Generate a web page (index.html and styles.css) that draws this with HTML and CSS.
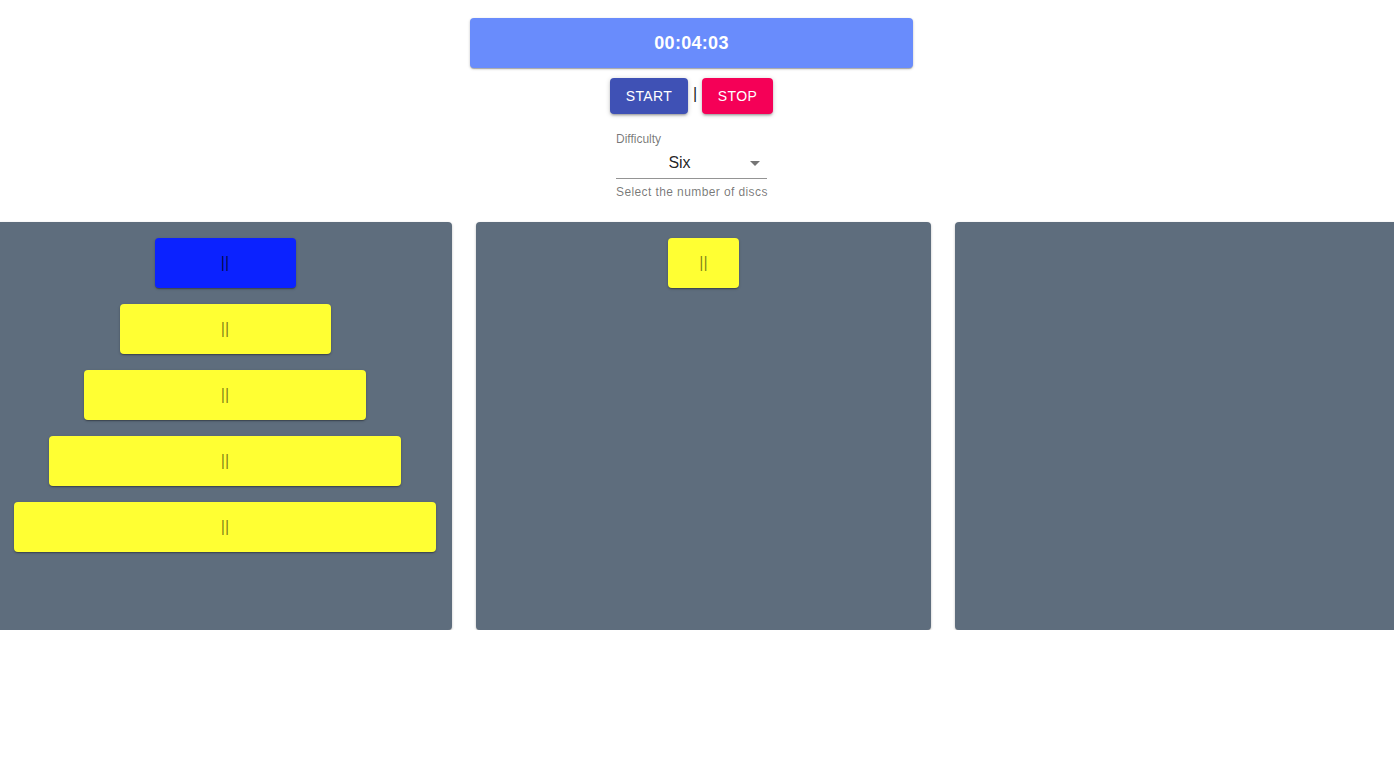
FILE: index.html
```html
<!DOCTYPE html>
<html>
<head>
<meta charset="utf-8">
<title>Towers of Hanoi</title>
<link rel="stylesheet" href="styles.css">
</head>
<body>
<div class="top">
  <div class="timer">00:04:03</div>
  <div class="controls">
    <button class="btn btn-start">START</button>
    <span class="sep">|</span>
    <button class="btn btn-stop">STOP</button>
  </div>
  <div class="form">
    <label class="form-label">Difficulty</label>
    <div class="select">
      <span class="select-value">Six</span>
      <svg class="select-icon" viewBox="0 0 24 24" width="24" height="24"><path d="M7 10l5 5 5-5z"/></svg>
    </div>
    <p class="helper">Select the number of discs</p>
  </div>
</div>
<div class="board">
  <div class="tower tower-first">
    <div class="disc disc-blue w2">||</div>
    <div class="disc w3">||</div>
    <div class="disc w4">||</div>
    <div class="disc w5">||</div>
    <div class="disc w6">||</div>
  </div>
  <div class="tower">
    <div class="disc w1">||</div>
  </div>
  <div class="tower"></div>
</div>
</body>
</html>
```

FILE: styles.css
```css
html, body {
  margin: 0;
  padding: 0;
  background: #ffffff;
  font-family: "Liberation Sans", Arial, sans-serif;
  overflow-x: hidden;
}

.top {
  width: 1383px;
  display: flex;
  flex-direction: column;
  align-items: center;
  padding-top: 18px;
}

.timer {
  width: 443px;
  height: 50px;
  box-sizing: border-box;
  background: #698cfc;
  border-radius: 4px;
  color: #ffffff;
  font-size: 18px;
  font-weight: 700;
  letter-spacing: 0.3px;
  display: flex;
  align-items: center;
  justify-content: center;
  box-shadow: 0 1px 3px rgba(0,0,0,0.2), 0 1px 1px rgba(0,0,0,0.14), 0 2px 1px -1px rgba(0,0,0,0.12);
}

.controls {
  margin-top: 10px;
  display: flex;
  align-items: center;
  height: 36px;
}

.btn {
  height: 36px;
  border: none;
  border-radius: 4px;
  padding: 6px 0;
  font-family: "Liberation Sans", Arial, sans-serif;
  font-size: 14px;
  font-weight: 400;
  letter-spacing: 0.4px;
  color: #ffffff;
  text-transform: uppercase;
  box-shadow: 0 1px 5px rgba(0,0,0,0.2), 0 2px 2px rgba(0,0,0,0.14), 0 3px 1px -2px rgba(0,0,0,0.12);
}

.btn-start {
  width: 78px;
  background: #3f51b5;
}

.btn-stop {
  width: 71px;
  background: #f50057;
}

.sep {
  width: 14px;
  text-align: center;
  font-size: 16px;
  color: #222222;
  margin-top: -4px;
}

.form {
  margin-top: 17px;
  position: relative;
  width: 151px;
  padding-top: 16px;
}

.form-label {
  position: absolute;
  left: 0;
  top: 0;
  font-size: 12px;
  line-height: 1;
  margin-top: 2px;
  color: rgba(0,0,0,0.54);
}

.select {
  position: relative;
  height: 32px;
  box-sizing: border-box;
  border-bottom: 1px solid rgba(0,0,0,0.42);
  padding: 6px 24px 7px 0;
  text-align: center;
}

.select-value {
  font-size: 16px;
  line-height: 19px;
  color: rgba(0,0,0,0.87);
}

.select-icon {
  position: absolute;
  right: 0;
  top: 4px;
  fill: rgba(0,0,0,0.54);
}

.helper {
  margin: 3px 0 0;
  font-size: 12px;
  line-height: 20px;
  letter-spacing: 0.4px;
  color: rgba(0,0,0,0.54);
  white-space: nowrap;
}

.board {
  margin-top: 20px;
  margin-left: -3px;
  display: flex;
  gap: 24px;
  width: 1413px;
}

.tower {
  flex: 0 0 455px;
  height: 408px;
  background: #5e6d7d;
  border-radius: 4px;
  box-shadow: 0 1px 3px rgba(0,0,0,0.2), 0 1px 1px rgba(0,0,0,0.14), 0 2px 1px -1px rgba(0,0,0,0.12);
  display: flex;
  flex-direction: column;
  align-items: center;
  padding-top: 16px;
  gap: 16px;
  box-sizing: border-box;
}

.tower-first {
  padding-left: 1px;
}

.disc {
  height: 50px;
  flex: 0 0 50px;
  background: #ffff33;
  border-radius: 4px;
  display: flex;
  align-items: center;
  justify-content: center;
  font-size: 16px;
  color: rgba(0,0,0,0.5);
  box-shadow: 0 1px 3px rgba(0,0,0,0.2), 0 1px 1px rgba(0,0,0,0.14), 0 2px 1px -1px rgba(0,0,0,0.12);
}

.disc-blue {
  background: #0b22ff;
  color: rgba(0,0,0,0.7);
}

.w1 { width: 71px; }
.w2 { width: 141px; }
.w3 { width: 211px; }
.w4 { width: 282px; }
.w5 { width: 352px; }
.w6 { width: 422px; }
```
